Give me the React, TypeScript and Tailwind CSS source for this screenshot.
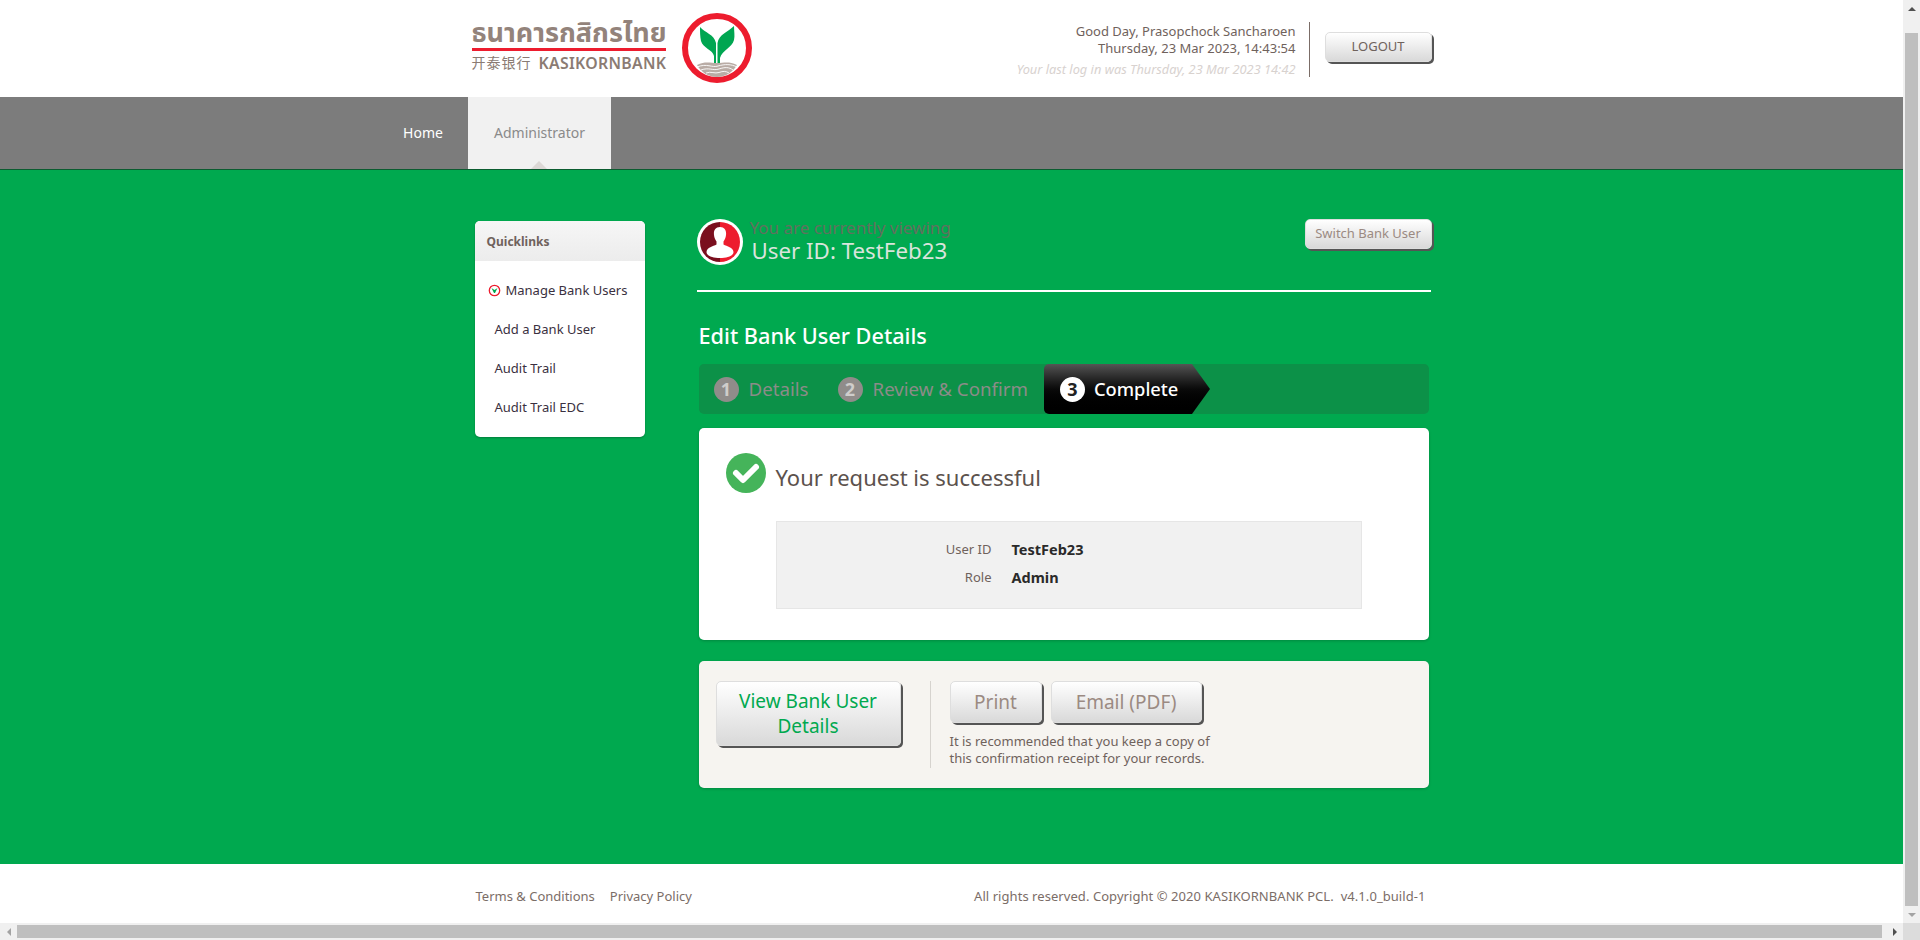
import React from "react";

const font = { fontFamily: '"Noto Sans", "Noto Sans Thai", "Noto Sans CJK SC", sans-serif' };

function Logo() {
  return (
    <div className="flex items-start h-full">
      <div className="w-[194px] flex flex-col pt-[17px]">
        <div className="text-[27px] leading-[30px] font-bold text-[#93837b] whitespace-nowrap h-[30px]">ธนาคารกสิกรไทย</div>
        <div className="h-[3px] bg-[#ed1c2e] mt-[1px]" />
        <div className="flex items-center mt-[5px] text-[#8b7b73] whitespace-nowrap">
          <span className="text-[14px] leading-[14px] tracking-[1px]">开泰银行</span>
          <span className="text-[15.800px] leading-[14px] font-semibold ml-[7px] tracking-[0.3px]">KASIKORNBANK</span>
        </div>
      </div>
      <svg className="ml-[15px] mt-[12px]" width="72" height="72" viewBox="0 0 72 72">
        <circle cx="36" cy="36" r="32" fill="#fff" stroke="#ed1c2e" strokeWidth="6" />
        <path d="M19 15 C24 21 33 22 35 31 V53 H33 V44 C32 38 22 36 20 29 C19 24 19 20 19 15 Z" fill="#00a651" />
        <path d="M53 14 C47 20 38 22 36.500 31 V53 H39 V46 C41 38 51 36 53 28 C54 24 53 19 53 14 Z" fill="#00a651" />
        <path d="M16 53 C24 49 29 51 36 51 C43 51 48 49 56 53 C52 60 45 65 36 65 C27 65 20 60 16 53 Z" fill="#b9aca5" />
        <path d="M16 55 C26 51 31 56 37 54 C44 52 50 52 56 55 M20 58 C28 55 32 59 38 57 C44 55 48 55 52 58 M25 61 C30 59 34 62 38 60.500 C42 59 45 59 48 61" stroke="#fff" strokeWidth="0.9" fill="none" />
      </svg>
    </div>
  );
}

function StepBadge({ n, active }: { n: number; active?: boolean }) {
  return (
    <span className={active
      ? "w-[25px] h-[25px] rounded-full bg-white text-[#222] flex items-center justify-center text-[18px] font-bold leading-none"
      : "w-[25px] h-[25px] rounded-full bg-[#908c8a] text-[#cfcdcb] flex items-center justify-center text-[18px] font-bold leading-none"}>
      {n}
    </span>
  );
}

function Avatar() {
  return (
    <svg width="46" height="46" viewBox="0 0 46 46" className="shrink-0">
      <circle cx="23" cy="23" r="23" fill="#fff" />
      <path d="M23 3 A20 20 0 0 0 23 43 Z" fill="#7a0f1e" />
      <path d="M23 3 A20 20 0 0 1 23 43 Z" fill="#ed1c2e" />
      <path d="M23 8 C28 8 29.500 12 29 16 C28.800 19 27.500 21 26.500 22.500 V25.500 C30 27.500 36 28 36.500 33 C36.500 37 30 39 23 39 C16 39 9.500 37 9.500 33 C10 28 16 27.500 19.500 25.500 V22.500 C18.500 21 17.200 19 17 16 C16.500 12 18 8 23 8 Z" fill="#fff" />
    </svg>
  );
}

const btn = "bg-gradient-to-b from-white to-[#d9d9d9] border border-[#dedede] shadow-[2px_2px_0_#555]";

export default function App() {
  return (
    <div style={font} className="h-[940px] w-full overflow-hidden flex flex-col">
      <div className="flex flex-1 min-h-0">
        <div className="flex-1 min-w-0 flex flex-col">
          <header className="h-[97px] bg-white">
            <div className="w-[960px] mx-auto h-full flex justify-between">
              <Logo />
              <div className="flex items-start pt-[22px]">
                <div className="text-right pr-[13px] w-[320px]">
                  <div className="text-[13px] leading-[17px] text-[#6f625c] pt-[1px]">Good Day, Prasopchock Sancharoen</div>
                  <div className="text-[13px] leading-[17px] text-[#6f625c]">Thursday, 23 Mar 2023, 14:43:54</div>
                  <div className="text-[12.800px] leading-[17px] text-[#d8d2cf] italic mt-[4px]">Your last log in was Thursday, 23 Mar 2023 14:42</div>
                </div>
                <div className="w-px h-[55px] bg-[#7b6d67]" />
                <button className={`${btn} ml-[15px] mt-[10px] w-[107px] h-[30px] rounded-[5px] text-[13px] text-[#6f625c]`}>LOGOUT</button>
              </div>
            </div>
          </header>

          <nav className="h-[73px] bg-[#7c7c7c] border-b border-[#0b5c30] flex pl-[378px]">
            <div className="w-[90px] h-[72px] flex items-center justify-center pb-[2px] text-[14px] text-white">Home</div>
            <div className="relative w-[143px] h-[72px] bg-[#f1f1f1] flex items-center justify-center pb-[2px] text-[14px] text-[#8a8a8a]">
              Administrator
              <span className="absolute left-[63px] bottom-0 w-0 h-0 border-l-[8px] border-r-[8px] border-b-[8px] border-l-transparent border-r-transparent border-b-[#dcd8d6]" />
            </div>
          </nav>

          <main className="flex-1 bg-[#00a94f]">
            <div className="w-[960px] mx-auto flex pt-[51px]">
              <aside className="w-[170px] h-[216px] ml-[3px] bg-white rounded-[5px] overflow-hidden shadow-[0_1px_2px_rgba(0,0,0,0.25)]">
                <div className="h-[40px] pl-[12px] pt-[1px] flex items-center bg-gradient-to-b from-[#f6f6f6] to-[#ececec] text-[12px] font-bold text-[#6f625c]">Quicklinks</div>
                <ul className="pt-[10px] text-[13px] text-[#3a3040]">
                  <li className="h-[39px] flex items-center pl-[13px]">
                    <svg width="13" height="13" viewBox="0 0 13 13" className="mr-[5px]">
                      <circle cx="6.500" cy="6.500" r="5.200" fill="#fff" stroke="#ed1c2e" strokeWidth="1.300" />
                      <path d="M3.500 4 L6.500 6 L9.500 4 L7 9 H6 Z" fill="#00a94f" />
                    </svg>
                    Manage Bank Users
                  </li>
                  <li className="h-[39px] flex items-center pl-[20px]">Add a Bank User</li>
                  <li className="h-[39px] flex items-center pl-[20px]">Audit Trail</li>
                  <li className="h-[39px] flex items-center pl-[20px]">Audit Trail EDC</li>
                </ul>
              </aside>

              <section className="w-[734px] ml-[52px] mt-[-2px]">
                <div className="flex justify-between h-[73px] border-b-2 border-white">
                  <div className="flex">
                    <Avatar />
                    <div className="ml-[7px]">
                      <div className="text-[17px] leading-[18px] text-[#62705f]">You are currently viewing</div>
                      <div className="text-[22.300px] leading-[27px] text-[#d9e4dc] ml-[2px]">User ID: TestFeb23</div>
                    </div>
                  </div>
                  <button className={`${btn} w-[127px] h-[30px] rounded-[5px] text-[13px] text-[#9b8a82] mr-[-1px]`}>Switch Bank User</button>
                </div>

                <h1 className="text-[21.700px] leading-[28px] font-medium text-white ml-[2px] mt-[30px]">Edit Bank User Details</h1>

                <div className="mt-[14px] ml-[2px] w-[730px] h-[50px] bg-[#0c9148] rounded-[5px] flex items-center pl-[15px] text-[18.700px] text-[#8c8c88]">
                  <StepBadge n={1} />
                  <span className="ml-[10px]">Details</span>
                  <span className="ml-[29px]"><StepBadge n={2} /></span>
                  <span className="ml-[10px]">Review &amp; Confirm</span>
                  <div className="ml-[16px] w-[166px] h-[50px] flex items-center pl-[16px] text-white bg-gradient-to-b from-[#555] via-[#0a0a0a] to-black [clip-path:polygon(0_0,148px_0,100%_50%,148px_100%,0_100%)] rounded-l-[5px]">
                    <StepBadge n={3} active />
                    <span className="ml-[9px] text-[18.300px] font-medium">Complete</span>
                  </div>
                </div>

                <div className="mt-[14px] ml-[2px] w-[730px] h-[212px] bg-white rounded-[5px] shadow-[0_1px_3px_rgba(0,0,0,0.2)] pl-[27px] pt-[25px]">
                  <div className="flex items-center h-[40px]">
                    <svg width="40" height="40" viewBox="0 0 40 40">
                      <circle cx="20" cy="20" r="20" fill="#45b45a" />
                      <path d="M10 20 L17 27 L30 14" stroke="#fff" strokeWidth="6" fill="none" strokeLinejoin="round" strokeLinecap="round" />
                    </svg>
                    <span className="ml-[10px] mt-[8px] text-[22px] text-[#5c524d]">Your request is successful</span>
                  </div>
                  <div className="ml-[50px] mt-[28px] w-[586px] h-[88px] bg-[#f1f1f1] border border-[#e6e6e6] pt-[14px]">
                    <div className="flex h-[28px] items-center">
                      <span className="w-[215px] text-right text-[13px] text-[#6f625c]">User ID</span>
                      <span className="ml-[20px] text-[14.500px] font-bold text-[#2a2a2a]">TestFeb23</span>
                    </div>
                    <div className="flex h-[28px] items-center">
                      <span className="w-[215px] text-right text-[13px] text-[#6f625c]">Role</span>
                      <span className="ml-[20px] text-[14.500px] font-bold text-[#2a2a2a]">Admin</span>
                    </div>
                  </div>
                </div>

                <div className="mt-[21px] ml-[2px] w-[730px] h-[127px] bg-[#f6f4f0] rounded-[5px] shadow-[0_1px_3px_rgba(0,0,0,0.2)] flex pl-[17px] pt-[20px]">
                  <button className={`${btn} w-[185px] h-[65px] rounded-[5px] text-[19px] leading-[25px] text-[#00a94f]`}>View Bank User<br />Details</button>
                  <div className="w-px h-[87px] bg-[#d6d3ce] ml-[29px]" />
                  <div className="ml-[19px]">
                    <div className="flex gap-[9px]">
                      <button className={`${btn} w-[92px] h-[42px] rounded-[5px] text-[19px] text-[#9b8a82]`}>Print</button>
                      <button className={`${btn} w-[151px] h-[42px] rounded-[5px] text-[19px] text-[#9b8a82]`}>Email (PDF)</button>
                    </div>
                    <p className="mt-[10px] text-[13px] leading-[17px] text-[#6f625c]">It is recommended that you keep a copy of<br />this confirmation receipt for your records.</p>
                  </div>
                </div>
              </section>
            </div>
          </main>

          <footer className="h-[59px] bg-white">
            <div className="w-[960px] mx-auto h-full flex items-center justify-between pt-[7px] pl-[4px] pr-[6px] text-[13px] text-[#7b6d67]">
              <div className="flex gap-[15px]"><span>Terms &amp; Conditions</span><span>Privacy Policy</span></div>
              <span className="tracking-[0.06px]">All rights reserved. Copyright © 2020 KASIKORNBANK PCL.&nbsp; v4.1.0_build-1</span>
            </div>
          </footer>
        </div>

        <div className="w-[17px] bg-[#f0f0f0] flex flex-col items-center">
          <div className="h-[17px] flex items-center justify-center shrink-0">
            <span className="w-0 h-0 border-l-[4px] border-r-[4px] border-b-[4px] border-l-transparent border-r-transparent border-b-[#505050]" />
          </div>
          <div className="mt-[16px] flex-1 w-[13px] bg-[#bfbfbf]" />
          <div className="h-[17px] flex items-center justify-center shrink-0">
            <span className="w-0 h-0 border-l-[4px] border-r-[4px] border-t-[4px] border-l-transparent border-r-transparent border-t-[#a3a3a3]" />
          </div>
        </div>
      </div>

      <div className="h-[17px] bg-[#f0f0f0] flex shrink-0">
        <div className="w-[17px] flex items-center justify-center">
          <span className="w-0 h-0 border-t-[4px] border-b-[4px] border-r-[4px] border-t-transparent border-b-transparent border-r-[#a3a3a3]" />
        </div>
        <div className="flex-1 my-[2px] mr-[4px] bg-[#bfbfbf]" />
        <div className="w-[17px] flex items-center justify-center">
          <span className="w-0 h-0 border-t-[4px] border-b-[4px] border-l-[4px] border-t-transparent border-b-transparent border-l-[#505050]" />
        </div>
        <div className="w-[17px] bg-[#dcdcdc]" />
      </div>
    </div>
  );
}
